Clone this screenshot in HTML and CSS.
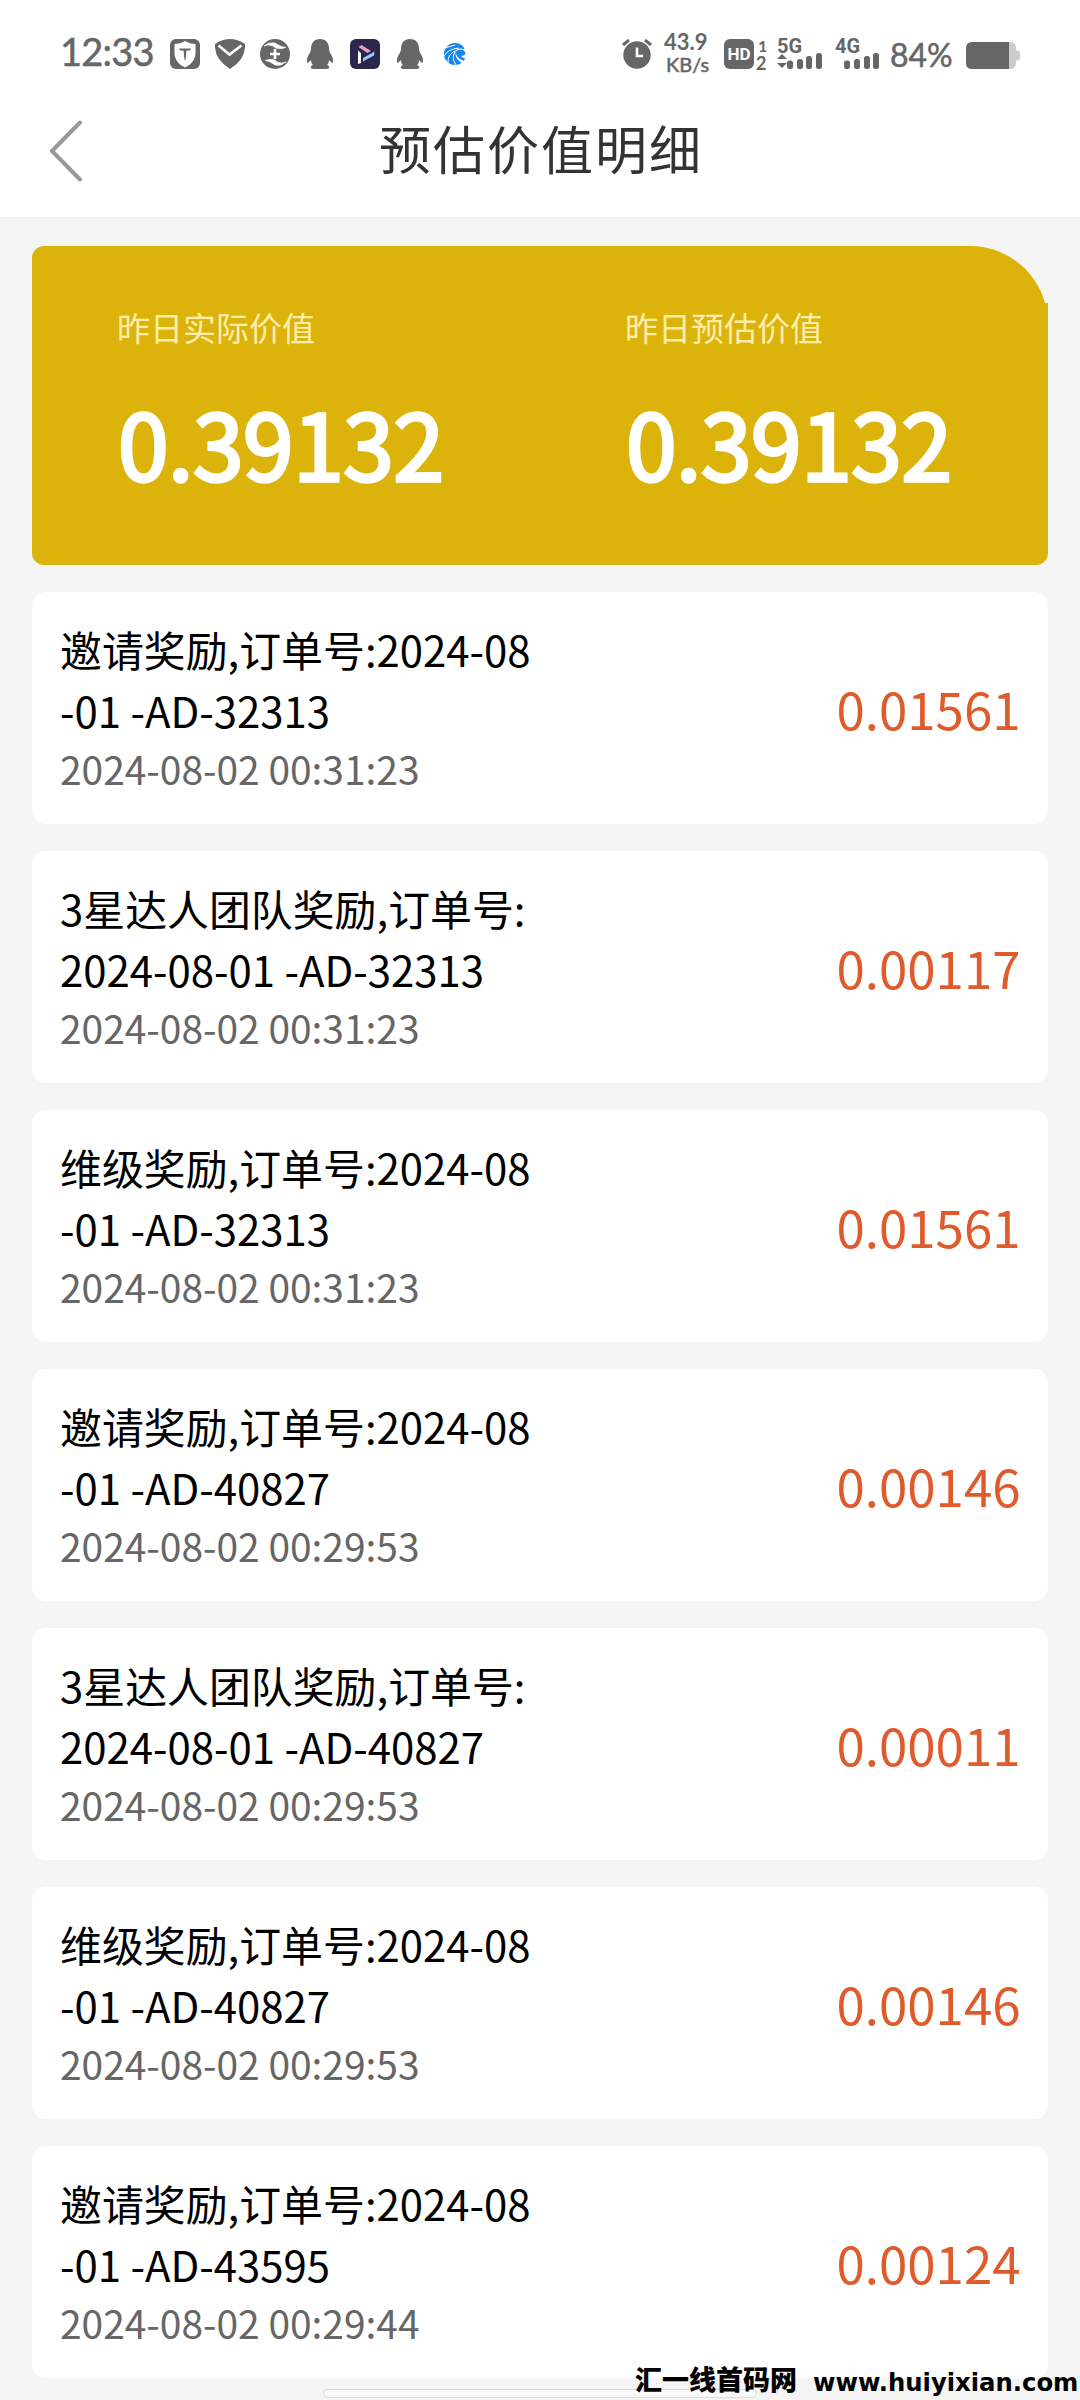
FILE: index.html
```html
<!DOCTYPE html>
<html lang="zh-CN">
<head>
<meta charset="utf-8">
<title>预估价值明细</title>
<link rel="stylesheet" href="styles.css">
</head>
<body>
<div class="screen">
  <header class="top">
    <div class="status">
      <span class="clock">12:33</span>
      <div class="apps">
        <svg width="30" height="30" viewBox="0 0 30 30"><rect width="30" height="30" rx="6" fill="#666"/><path d="M15 2C12 4 8 5 4.500 5V14C4.500 21 9 25.500 15 28.500C21 25.500 25.500 21 25.500 14V5C22 5 18 4 15 2Z" fill="#fff"/><path d="M9 9.500H21L20 11.500H16.500L15.500 21H14.500L13.500 11.500H10Z" fill="#666"/></svg>
        <svg width="30" height="30" viewBox="0 0 30 30"><path d="M0 5Q15 -5 30 5Q31 20 15 30Q-1 20 0 5Z" fill="#666"/><path d="M3.500 6.500L14.500 15.500L26.500 6.500" fill="none" stroke="#fff" stroke-width="2.600"/></svg>
        <svg width="30" height="30" viewBox="0 0 30 30"><circle cx="15" cy="15" r="15" fill="#666"/><path d="M4 7Q9 2.500 15 4Q21 8 26 8.500Q17 11.500 13 7Q8 5 4 7ZM26 23Q21 27.500 15 26Q10 22 5 21.500Q14 18.500 17 23Q22 25 26 23Z" fill="#fff" stroke="#fff" stroke-width=".6"/><path d="M15 10V20M10 15H20" stroke="#fff" stroke-width="2.600"/></svg>
        <svg width="30" height="30" viewBox="0 0 30 30"><path d="M15 0C9 0 6 4 6 10C6 13 3 16 2 20C2 22 2 24 3 24L6 21C6 24 7 25 8 26C5 27 5 30 8 30H22C25 30 25 27 22 26C23 25 24 24 24 21L27 24C28 24 28 22 28 20C27 16 24 13 24 10C24 4 21 0 15 0Z" fill="#666"/></svg>
        <svg width="30" height="30" viewBox="0 0 30 30"><rect width="30" height="30" rx="6" fill="#29274b"/><path d="M8 11.500L11 14V24L8 25Z" fill="#fff"/><path d="M8.500 8L11.500 6L21 12L17.500 14Z" fill="#ee9bcb"/><path d="M13 22.500V19L24.500 12.500L24 16.500Z" fill="#8fc9ff"/></svg>
        <svg width="30" height="30" viewBox="0 0 30 30"><path d="M15 0C9 0 6 4 6 10C6 13 3 16 2 20C2 22 2 24 3 24L6 21C6 24 7 25 8 26C5 27 5 30 8 30H22C25 30 25 27 22 26C23 25 24 24 24 21L27 24C28 24 28 22 28 20C27 16 24 13 24 10C24 4 21 0 15 0Z" fill="#666"/></svg>
        <svg width="30" height="30" viewBox="0 0 30 30"><circle cx="15" cy="15" r="11" fill="#1684ee"/><path d="M16 12Q23 8 25.500 14Q25 17 21 17Q23 20 26.500 19L27 10L23 7Q27 12 21 9.500Q16 9.500 16 12ZM15.500 14Q17 18 20 20L24 22L22 24Q15 20 15.500 14Z" fill="#fff"/><path d="M4 17Q8 10 19 9M8 25Q7 14 17 11.500M16 26Q11 19 15 13M5 9L15 6" fill="none" stroke="#fff" stroke-width="1"/></svg>
      </div>
      <svg class="alarm" width="30" height="30" viewBox="0 0 30 30"><circle cx="15" cy="16" r="13.700" fill="#666"/><path d="M1 6L7 1M23 1L29 6" stroke="#666" stroke-width="3"/><path d="M15 8.500V17H21" fill="none" stroke="#fff" stroke-width="2.600"/></svg>
      <div class="speed"><span>43.9</span><span class="unit">KB/s</span></div>
      <div class="hd">HD</div>
      <div class="sims"><span>1</span><span class="active">2</span></div>
      <div class="signal">
        <span>5G</span>
        <svg width="46" height="16" viewBox="0 0 46 16"><path d="M0 6L5 1L10 6ZM0 10L5 15L10 10Z" fill="#666"/><g fill="#666"><rect x="10" y="7.500" width="6" height="8.500" rx="2.500"/><rect x="20" y="6" width="6" height="10" rx="2.500"/><rect x="29" y="3" width="6" height="13" rx="2.500"/><rect x="39" y="0" width="6" height="16" rx="2.500"/></g></svg>
      </div>
      <div class="signal second">
        <span>4G</span>
        <svg width="46" height="16" viewBox="0 0 46 16"><g fill="#666"><rect x="9" y="7.500" width="6" height="8.500" rx="2.500"/><rect x="19" y="6" width="6" height="10" rx="2.500"/><rect x="29" y="3" width="6" height="13" rx="2.500"/><rect x="38" y="0" width="6" height="16" rx="2.500"/></g></svg>
      </div>
      <span class="percent">84%</span>
      <svg class="battery" width="54" height="27" viewBox="0 0 54 27"><path d="M43 0H44Q50 0 50 6V8.500H51Q54 8.500 54 11V16Q54 18.500 51 18.500H50V21Q50 27 44 27H43Z" fill="#ccc"/><path d="M43 0H6Q0 0 0 6V21Q0 27 6 27H43Z" fill="#666"/></svg>
    </div>
    <nav class="nav">
      <svg width="34" height="62" viewBox="0 0 34 62"><path d="M31 2.500L3 31L31 59.500" fill="none" stroke="#999" stroke-width="4" stroke-linecap="round" stroke-linejoin="round"/></svg>
      <h1>预估价值明细</h1>
    </nav>
  </header>
  <main>
    <section class="summary">
      <div><p>昨日实际价值</p><strong>0.39132</strong></div>
      <div><p>昨日预估价值</p><strong>0.39132</strong></div>
    </section>
    <ul class="list">
      <li><div><p>邀请奖励,订单号:2024-08<br>-01 -AD-32313</p><time>2024-08-02 00:31:23</time></div><b>0.01561</b></li>
      <li><div><p>3星达人团队奖励,订单号:<br>2024-08-01 -AD-32313</p><time>2024-08-02 00:31:23</time></div><b>0.00117</b></li>
      <li><div><p>维级奖励,订单号:2024-08<br>-01 -AD-32313</p><time>2024-08-02 00:31:23</time></div><b>0.01561</b></li>
      <li><div><p>邀请奖励,订单号:2024-08<br>-01 -AD-40827</p><time>2024-08-02 00:29:53</time></div><b>0.00146</b></li>
      <li><div><p>3星达人团队奖励,订单号:<br>2024-08-01 -AD-40827</p><time>2024-08-02 00:29:53</time></div><b>0.00011</b></li>
      <li><div><p>维级奖励,订单号:2024-08<br>-01 -AD-40827</p><time>2024-08-02 00:29:53</time></div><b>0.00146</b></li>
      <li><div><p>邀请奖励,订单号:2024-08<br>-01 -AD-43595</p><time>2024-08-02 00:29:44</time></div><b>0.00124</b></li>
    </ul>
  </main>
  <div class="gesture"></div>
  <div class="watermark"><span class="site">汇一线首码网</span><span class="url">www.huiyixian.com</span></div>
</div>
</body>
</html>
```
FILE: styles.css
```css
* { box-sizing: border-box; margin: 0; padding: 0; }
body { background: #f5f5f5; font-family: "Noto Sans CJK SC", sans-serif; }
.screen { position: relative; width: 1080px; height: 2400px; overflow: hidden; }
.top { height: 218px; background: #fff; border-bottom: 1px solid #efefef; }
svg { display: block; flex: none; }

.status { display: flex; align-items: flex-start; height: 108px; padding: 39px 0 0 60px; color: #666; font-family: Lato, sans-serif; white-space: nowrap; }
.clock { width: 110px; margin-top: -8px; font-size: 38px; line-height: 40px; letter-spacing: -.8px; -webkit-text-stroke: .5px #666; }
.apps { display: flex; gap: 15px; width: 452px; }
.speed { width: 60px; margin: -9px 0 0 12px; font-size: 22px; font-weight: 700; line-height: 24px; }
.speed span { display: block; }
.speed .unit { margin-left: 2px; font-size: 20px; font-weight: 400; line-height: 20px; -webkit-text-stroke: .5px #666; }
.hd { width: 30px; height: 30px; border-radius: 6px; background: #666; color: #fff; font: 700 17px/30px Roboto, sans-serif; text-align: center; }
.sims { width: 23px; padding-left: 2px; font: 700 16px/14px Lato, sans-serif; }
.sims span { display: block; padding-left: 2px; }
.sims .active { padding-left: 0; font-size: 18px; line-height: 20px; }
.signal { width: 58px; height: 30px; font: 700 20px/14px Roboto, sans-serif; }
.signal span { display: block; }
.signal.second { width: 55px; }
.percent { width: 76px; margin-top: -4px; font-size: 32px; line-height: 40px; -webkit-text-stroke: .5px #666; }
.battery { margin-top: 3px; }

.nav { display: grid; grid-template-columns: 50px 1fr 50px; align-items: center; height: 86px; padding: 0 49px; }
.nav h1 { margin-bottom: 6px; color: #333; font-size: 52px; font-weight: 400; line-height: 76px; letter-spacing: 2px; text-indent: 2px; text-align: center; }

main { display: flex; flex-direction: column; gap: 27px; padding: 28px 32px 0; }
.summary { position: relative; isolation: isolate; display: grid; grid-template-columns: 1fr 1fr; height: 319px; }
.summary::before, .summary::after { content: ""; position: absolute; z-index: -1; left: 0; right: 0; background: #dcb30b; }
.summary::before { top: 0; height: 78px; border-radius: 12px 78px 0 0; }
.summary::after { top: 57px; bottom: 0; border-radius: 0 0 12px 12px; }
.summary div { padding: 57px 0 0 85px; }
.summary p { color: #ffedaa; font-size: 33px; line-height: 48px; }
.summary strong { display: block; margin: 24px 0 0 1px; color: #fff; font-size: 91px; font-weight: 400; line-height: 132px; letter-spacing: -.4px; white-space: nowrap; -webkit-text-stroke: 3.400px #fff; }

.list { display: flex; flex-direction: column; gap: 27px; list-style: none; }
.list li { display: flex; justify-content: space-between; align-items: center; height: 232px; padding: 0 27.500px 0 28px; border-radius: 14px; background: #fff; }
.list p { font-size: 41.900px; line-height: 60.500px; color: #000; }
.list time { display: block; font-size: 38.900px; line-height: 56.500px; color: #666; }
.list b { color: #df5b2b; font-size: 51px; font-weight: 400; line-height: 74px; }

.gesture { position: absolute; left: 323px; top: 2389px; width: 434px; height: 9px; border: 1px solid #ddd; border-radius: 5px; background: #fafafa; }
.watermark { position: absolute; left: 635px; top: 2362px; display: flex; align-items: flex-start; gap: 16px; color: #000; line-height: 34px; white-space: nowrap; }
.site { font-size: 27px; font-weight: 900; }
.url { padding-top: 4px; font-family: "DejaVu Sans", sans-serif; font-size: 24.300px; font-weight: 700; }
```
